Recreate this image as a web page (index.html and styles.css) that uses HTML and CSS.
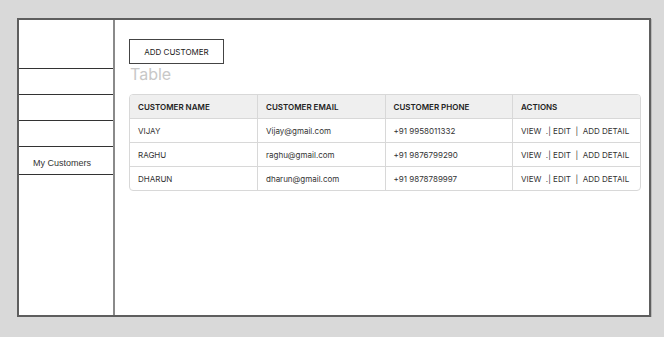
FILE: index.html
```html
<!DOCTYPE html>
<html lang="en">
<head>
    <meta charset="UTF-8">
    <meta name="viewport" content="width=device-width, initial-scale=1.0">
    <title>Customers</title>
    <link rel="stylesheet" href="styles.css">
</head>
<body>
    <div class="frame">
        <!-- Menu lateral -->
        <div class="sidebar">
            <div class="side-top"></div>
            <div class="side-item"></div>
            <div class="side-item"></div>
            <div class="side-item"></div>
            <div class="side-item active">My Customers</div>
        </div>

        <!-- Contenido -->
        <div class="main">
            <button class="add-btn">ADD CUSTOMER</button>
            <div class="title">Table</div>
            <div class="table-wrap">
                <table>
                    <thead>
                        <tr>
                            <th>CUSTOMER NAME</th>
                            <th>CUSTOMER EMAIL</th>
                            <th>CUSTOMER PHONE</th>
                            <th>ACTIONS</th>
                        </tr>
                    </thead>
                    <tbody>
                        <tr>
                            <td>VIJAY</td>
                            <td>Vijay@gmail.com</td>
                            <td>+91 9958011332</td>
                            <td>VIEW &nbsp;.| EDIT &nbsp;|&nbsp; ADD DETAIL</td>
                        </tr>
                        <tr>
                            <td>RAGHU</td>
                            <td>raghu@gmail.com</td>
                            <td>+91 9876799290</td>
                            <td>VIEW &nbsp;.| EDIT &nbsp;|&nbsp; ADD DETAIL</td>
                        </tr>
                        <tr>
                            <td>DHARUN</td>
                            <td>dharun@gmail.com</td>
                            <td>+91 9878789997</td>
                            <td>VIEW &nbsp;.| EDIT &nbsp;|&nbsp; ADD DETAIL</td>
                        </tr>
                    </tbody>
                </table>
            </div>
        </div>
    </div>
</body>
</html>
```

FILE: styles.css
```css
body {
    margin: 0;
    padding: 18px 0 0 17px;
    background-color: #d9d9d9;
    font-family: Inter, "Liberation Sans", sans-serif;
    color: #333;
}

/* Marco principal */
.frame {
    display: flex;
    width: 630px;
    height: 295px;
    background-color: #fff;
    border: 2px solid #5e5e5e;
    box-shadow: 1px 1px 0 #b8b8b8;
}

/* Menu lateral */
.sidebar {
    width: 94px;
    border-right: 2px solid #8a8a8a;
    display: flex;
    flex-direction: column;
}

.side-top {
    height: 48px;
    border-bottom: 1px solid #333;
}

.side-item {
    height: 25px;
    border-bottom: 1px solid #333;
    font-size: 8px;
    color: #333;
    display: flex;
    align-items: center;
    padding-left: 14px;
}

.side-item.active {
    height: 23px;
    padding-top: 4px;
    font-family: "Liberation Sans", Arial, sans-serif;
    font-size: 9px;
}

/* Contenido */
.main {
    flex: 1;
    padding: 19px 8px 0 14px;
}

.add-btn {
    display: block;
    width: 95px;
    height: 25px;
    background: #fff;
    border: 1px solid #444;
    font-family: Inter, "Liberation Sans", sans-serif;
    font-size: 8px;
    color: #222;
    padding: 0;
    cursor: pointer;
}

.title {
    font-size: 16px;
    color: #c8c8c8;
    line-height: 20px;
    margin: 0 0 10px 1px;
}

.table-wrap {
    border: 1px solid #d8d8d8;
    border-radius: 4px;
    overflow: hidden;
}

table {
    width: 100%;
    border-collapse: collapse;
    table-layout: fixed;
    font-size: 8px;
}

th {
    background-color: #efefef;
    font-weight: 600;
    color: #222;
    text-align: left;
    height: 23px;
    padding: 0 8px;
    border-right: 1px solid #d8d8d8;
    border-bottom: 1px solid #d8d8d8;
}

td {
    height: 23px;
    padding: 0 8px;
    color: #333;
    border-right: 1px solid #d8d8d8;
    border-bottom: 1px solid #d8d8d8;
}

th:last-child, td:last-child {
    border-right: none;
}

tbody tr:last-child td {
    border-bottom: none;
}
```
